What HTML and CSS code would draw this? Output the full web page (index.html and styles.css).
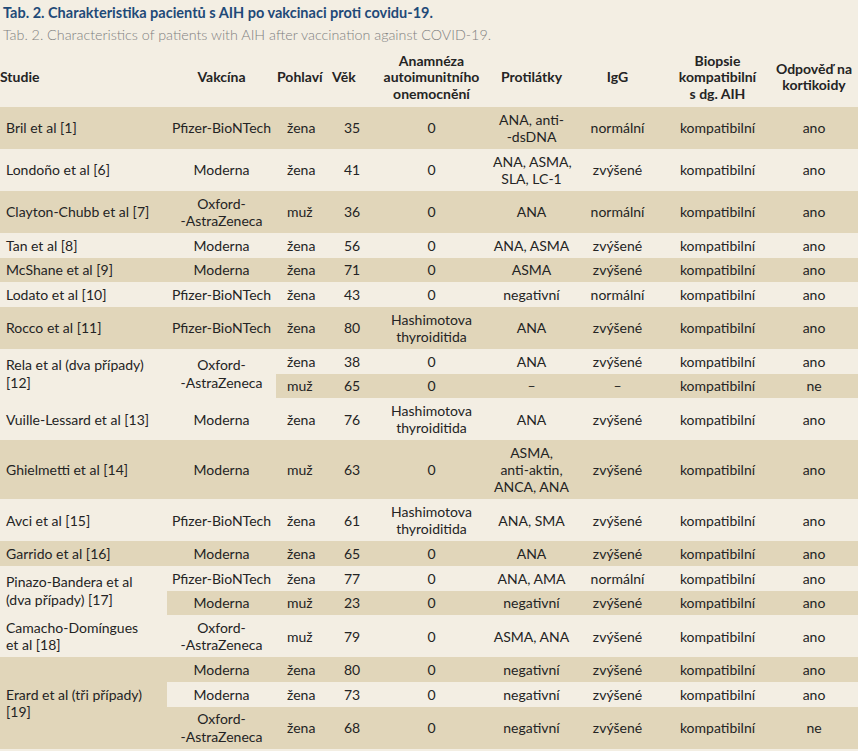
FILE: index.html
```html
<!DOCTYPE html>
<html lang="cs">
<head>
<meta charset="utf-8">
<title>Tab. 2</title>
<link rel="stylesheet" href="styles.css">
</head>
<body>
<div class="page">
  <p class="title">Tab. 2. Charakteristika pacientů s AIH po vakcinaci proti covidu-19.</p>
  <p class="subtitle">Tab. 2. Characteristics of patients with AIH after vaccination against COVID-19.</p>
  <table class="aih">
    <colgroup>
      <col class="c-studie">
      <col class="c-vakcina">
      <col class="c-pohlavi">
      <col class="c-vek">
      <col class="c-anam">
      <col class="c-proti">
      <col class="c-igg">
      <col class="c-biop">
      <col class="c-odp">
    </colgroup>
    <thead>
      <tr>
        <th class="h-studie">Studie</th>
        <th>Vakcína</th>
        <th class="h-pohlavi">Pohlaví</th>
        <th class="h-vek">Věk</th>
        <th>Anamnéza<br>autoimunitního<br>onemocnění</th>
        <th>Protilátky</th>
        <th>IgG</th>
        <th>Biopsie<br>kompatibilní<br>s dg. AIH</th>
        <th>Odpověď na<br>kortikoidy</th>
      </tr>
    </thead>
    <tbody>
      <tr class="dark">
        <td class="studie">Bril et al [1]</td><td>Pfizer-BioNTech</td><td class="sex">žena</td><td class="age">35</td><td>0</td><td>ANA, anti-<br>-dsDNA</td><td>normální</td><td>kompatibilní</td><td>ano</td>
      </tr>
      <tr class="light">
        <td class="studie">Londoño et al [6]</td><td>Moderna</td><td class="sex">žena</td><td class="age">41</td><td>0</td><td>ANA, ASMA,<br>SLA, LC-1</td><td>zvýšené</td><td>kompatibilní</td><td>ano</td>
      </tr>
      <tr class="dark">
        <td class="studie">Clayton-Chubb et al [7]</td><td>Oxford-<br>-AstraZeneca</td><td class="sex">muž</td><td class="age">36</td><td>0</td><td>ANA</td><td>normální</td><td>kompatibilní</td><td>ano</td>
      </tr>
      <tr class="light">
        <td class="studie">Tan et al [8]</td><td>Moderna</td><td class="sex">žena</td><td class="age">56</td><td>0</td><td>ANA, ASMA</td><td>zvýšené</td><td>kompatibilní</td><td>ano</td>
      </tr>
      <tr class="dark">
        <td class="studie">McShane et al [9]</td><td>Moderna</td><td class="sex">žena</td><td class="age">71</td><td>0</td><td>ASMA</td><td>zvýšené</td><td>kompatibilní</td><td>ano</td>
      </tr>
      <tr class="light">
        <td class="studie">Lodato et al [10]</td><td>Pfizer-BioNTech</td><td class="sex">žena</td><td class="age">43</td><td>0</td><td>negativní</td><td>normální</td><td>kompatibilní</td><td>ano</td>
      </tr>
      <tr class="dark">
        <td class="studie">Rocco et al [11]</td><td>Pfizer-BioNTech</td><td class="sex">žena</td><td class="age">80</td><td>Hashimotova<br>thyroiditida</td><td>ANA</td><td>zvýšené</td><td>kompatibilní</td><td>ano</td>
      </tr>
      <tr class="light">
        <td class="studie" rowspan="2">Rela et al (dva případy)<br>[12]</td><td rowspan="2">Oxford-<br>-AstraZeneca</td><td class="sex">žena</td><td class="age">38</td><td>0</td><td>ANA</td><td>zvýšené</td><td>kompatibilní</td><td>ano</td>
      </tr>
      <tr class="dark">
        <td class="sex">muž</td><td class="age">65</td><td>0</td><td>–</td><td>–</td><td>kompatibilní</td><td>ne</td>
      </tr>
      <tr class="light">
        <td class="studie">Vuille-Lessard et al [13]</td><td>Moderna</td><td class="sex">žena</td><td class="age">76</td><td>Hashimotova<br>thyroiditida</td><td>ANA</td><td>zvýšené</td><td>kompatibilní</td><td>ano</td>
      </tr>
      <tr class="dark">
        <td class="studie">Ghielmetti et al [14]</td><td>Moderna</td><td class="sex">muž</td><td class="age">63</td><td>0</td><td>ASMA,<br>anti-aktin,<br>ANCA, ANA</td><td>zvýšené</td><td>kompatibilní</td><td>ano</td>
      </tr>
      <tr class="light">
        <td class="studie">Avci et al [15]</td><td>Pfizer-BioNTech</td><td class="sex">žena</td><td class="age">61</td><td>Hashimotova<br>thyroiditida</td><td>ANA, SMA</td><td>zvýšené</td><td>kompatibilní</td><td>ano</td>
      </tr>
      <tr class="dark">
        <td class="studie">Garrido et al [16]</td><td>Moderna</td><td class="sex">žena</td><td class="age">65</td><td>0</td><td>ANA</td><td>zvýšené</td><td>kompatibilní</td><td>ano</td>
      </tr>
      <tr class="light">
        <td class="studie" rowspan="2">Pinazo-Bandera et al<br>(dva případy) [17]</td><td>Pfizer-BioNTech</td><td class="sex">žena</td><td class="age">77</td><td>0</td><td>ANA, AMA</td><td>normální</td><td>kompatibilní</td><td>ano</td>
      </tr>
      <tr class="dark">
        <td>Moderna</td><td class="sex">muž</td><td class="age">23</td><td>0</td><td>negativní</td><td>zvýšené</td><td>kompatibilní</td><td>ano</td>
      </tr>
      <tr class="light">
        <td class="studie">Camacho-Domíngues<br>et al [18]</td><td>Oxford-<br>-AstraZeneca</td><td class="sex">muž</td><td class="age">79</td><td>0</td><td>ASMA, ANA</td><td>zvýšené</td><td>kompatibilní</td><td>ano</td>
      </tr>
      <tr class="dark">
        <td class="studie" rowspan="3">Erard et al (tři případy)<br>[19]</td><td>Moderna</td><td class="sex">žena</td><td class="age">80</td><td>0</td><td>negativní</td><td>zvýšené</td><td>kompatibilní</td><td>ano</td>
      </tr>
      <tr class="light">
        <td>Moderna</td><td class="sex">žena</td><td class="age">73</td><td>0</td><td>negativní</td><td>zvýšené</td><td>kompatibilní</td><td>ano</td>
      </tr>
      <tr class="dark">
        <td>Oxford-<br>-AstraZeneca</td><td class="sex">žena</td><td class="age">68</td><td>0</td><td>negativní</td><td>zvýšené</td><td>kompatibilní</td><td>ne</td>
      </tr>
    </tbody>
  </table>
</div>
</body>
</html>
```

FILE: styles.css
```css
html, body {
  margin: 0;
  padding: 0;
  background: #f3eee3;
}

.page {
  font-family: Lato, "Open Sans", sans-serif;
  color: #242424;
  width: 858px;
}

.title {
  margin: 0;
  padding: 4px 0 0 3px;
  font-size: 14.5px;
  line-height: 18px;
  font-weight: 700;
  color: #1f4a78;
}

.subtitle {
  margin: 0;
  padding: 4px 0 0 3px;
  font-size: 14.3px;
  line-height: 18px;
  font-weight: 300;
  color: #808080;
}

.aih {
  width: 858px;
  border-collapse: collapse;
  border-spacing: 0;
  table-layout: fixed;
  font-size: 14px;
}

.c-studie { width: 167px; }
.c-vakcina { width: 109px; }
.c-pohlavi { width: 50px; }
.c-vek { width: 44px; }
.c-anam { width: 123px; }
.c-proti { width: 77px; }
.c-igg { width: 95px; }
.c-biop { width: 105px; }
.c-odp { width: 88px; }

.aih th {
  font-weight: 700;
  text-align: center;
  vertical-align: middle;
  line-height: 16.5px;
  padding: 8.5px 0 5px;
  color: #242424;
  white-space: nowrap;
}

.aih th.h-studie { text-align: left; padding-left: 0; }
.aih th.h-pohlavi { text-align: left; padding-left: 1px; }
.aih th.h-vek { text-align: left; padding-left: 6px; }

.aih td {
  text-align: center;
  vertical-align: middle;
  line-height: 17.3px;
  padding: 3.7px 0;
  white-space: nowrap;
}

.aih td.studie { text-align: left; padding-left: 6px; }
.aih td.sex { text-align: left; padding-left: 11px; }
.aih td.age { text-align: left; padding-left: 18px; }

.aih tr.dark td { background: #e1d6ba; }
.aih tr.light td { background: #f3eee3; }
```
